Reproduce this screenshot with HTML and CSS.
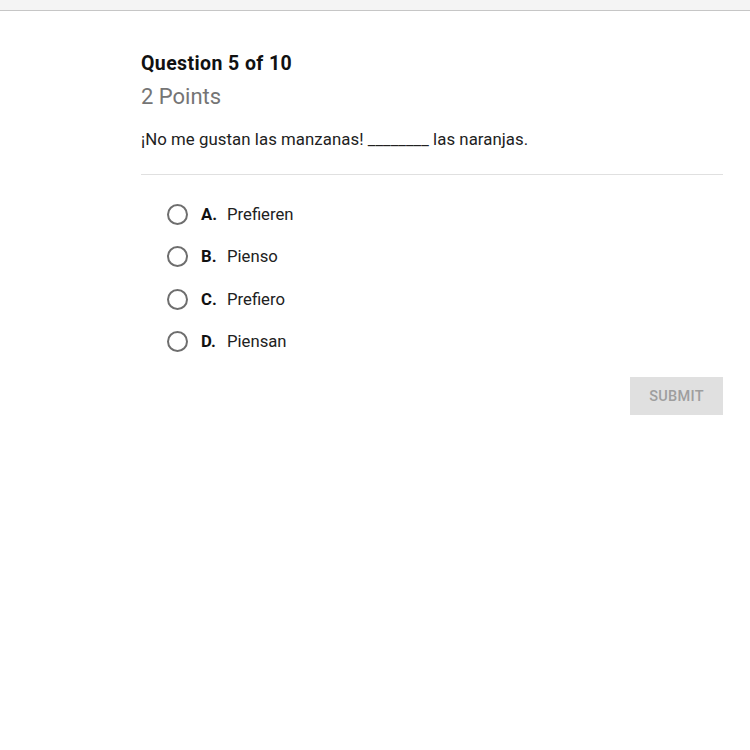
FILE: index.html
```html
<!DOCTYPE html>
<html>
<head>
<meta charset="utf-8">
<link rel="stylesheet" href="styles.css">
</head>
<body>
<div class="topbar"></div>
<main class="quiz">
  <h1 class="q-title">Question 5 of 10</h1>
  <div class="q-points">2 Points</div>
  <p class="q-text">¡No me gustan las manzanas! ________ las naranjas.</p>
  <hr class="divider">
  <ul class="options">
    <li class="option"><span class="radio"></span><span class="letter">A.</span><span class="answer">Prefieren</span></li>
    <li class="option"><span class="radio"></span><span class="letter">B.</span><span class="answer">Pienso</span></li>
    <li class="option"><span class="radio"></span><span class="letter">C.</span><span class="answer">Prefiero</span></li>
    <li class="option"><span class="radio"></span><span class="letter">D.</span><span class="answer">Piensan</span></li>
  </ul>
  <div class="actions"><button class="submit">SUBMIT</button></div>
</main>
</body>
</html>
```
FILE: styles.css
```css
html, body {
  margin: 0;
  padding: 0;
  background: #fff;
  font-family: Roboto, "Liberation Sans", sans-serif;
  color: #212121;
}
.topbar {
  height: 10px;
  background: #f4f4f4;
  border-bottom: 1px solid #c6c6c6;
}
.quiz {
  margin-left: 141px;
  width: 582px;
  padding-top: 41px;
}
.q-title {
  margin: 0;
  font-size: 19.5px;
  font-weight: 700;
  line-height: 24px;
  color: #111;
  letter-spacing: 0.4px;
}
.q-points {
  margin-top: 8px;
  font-size: 22px;
  line-height: 26px;
  color: #757575;
}
.q-text {
  margin: 19px 0 0;
  font-size: 16.8px;
  line-height: 20px;
  letter-spacing: 0.06px;
  color: #212121;
}
.divider {
  margin: 25px 0 0;
  border: 0;
  border-top: 1px solid #e0e0e0;
}
.options {
  list-style: none;
  margin: 0;
  padding: 18px 0 0 26px;
}
.option {
  display: flex;
  align-items: center;
  height: 42.5px;
  font-size: 16.7px;
}
.radio {
  border: 2px solid #6e6e6e;
  border-radius: 50%;
  box-sizing: border-box;
  width: 21px;
  height: 21px;
  margin-right: 13px;
}
.letter {
  font-weight: 700;
  width: 26px;
  color: #111;
}
.answer {
  color: #212121;
}
.actions {
  display: flex;
  justify-content: flex-end;
  margin-top: 14px;
}
.submit {
  width: 93px;
  height: 38px;
  border: 0;
  background: #e0e0e0;
  color: #9e9e9e;
  font-family: Roboto, "Liberation Sans", sans-serif;
  font-size: 14.5px;
  font-weight: 500;
  letter-spacing: 0.3px;
}
```
